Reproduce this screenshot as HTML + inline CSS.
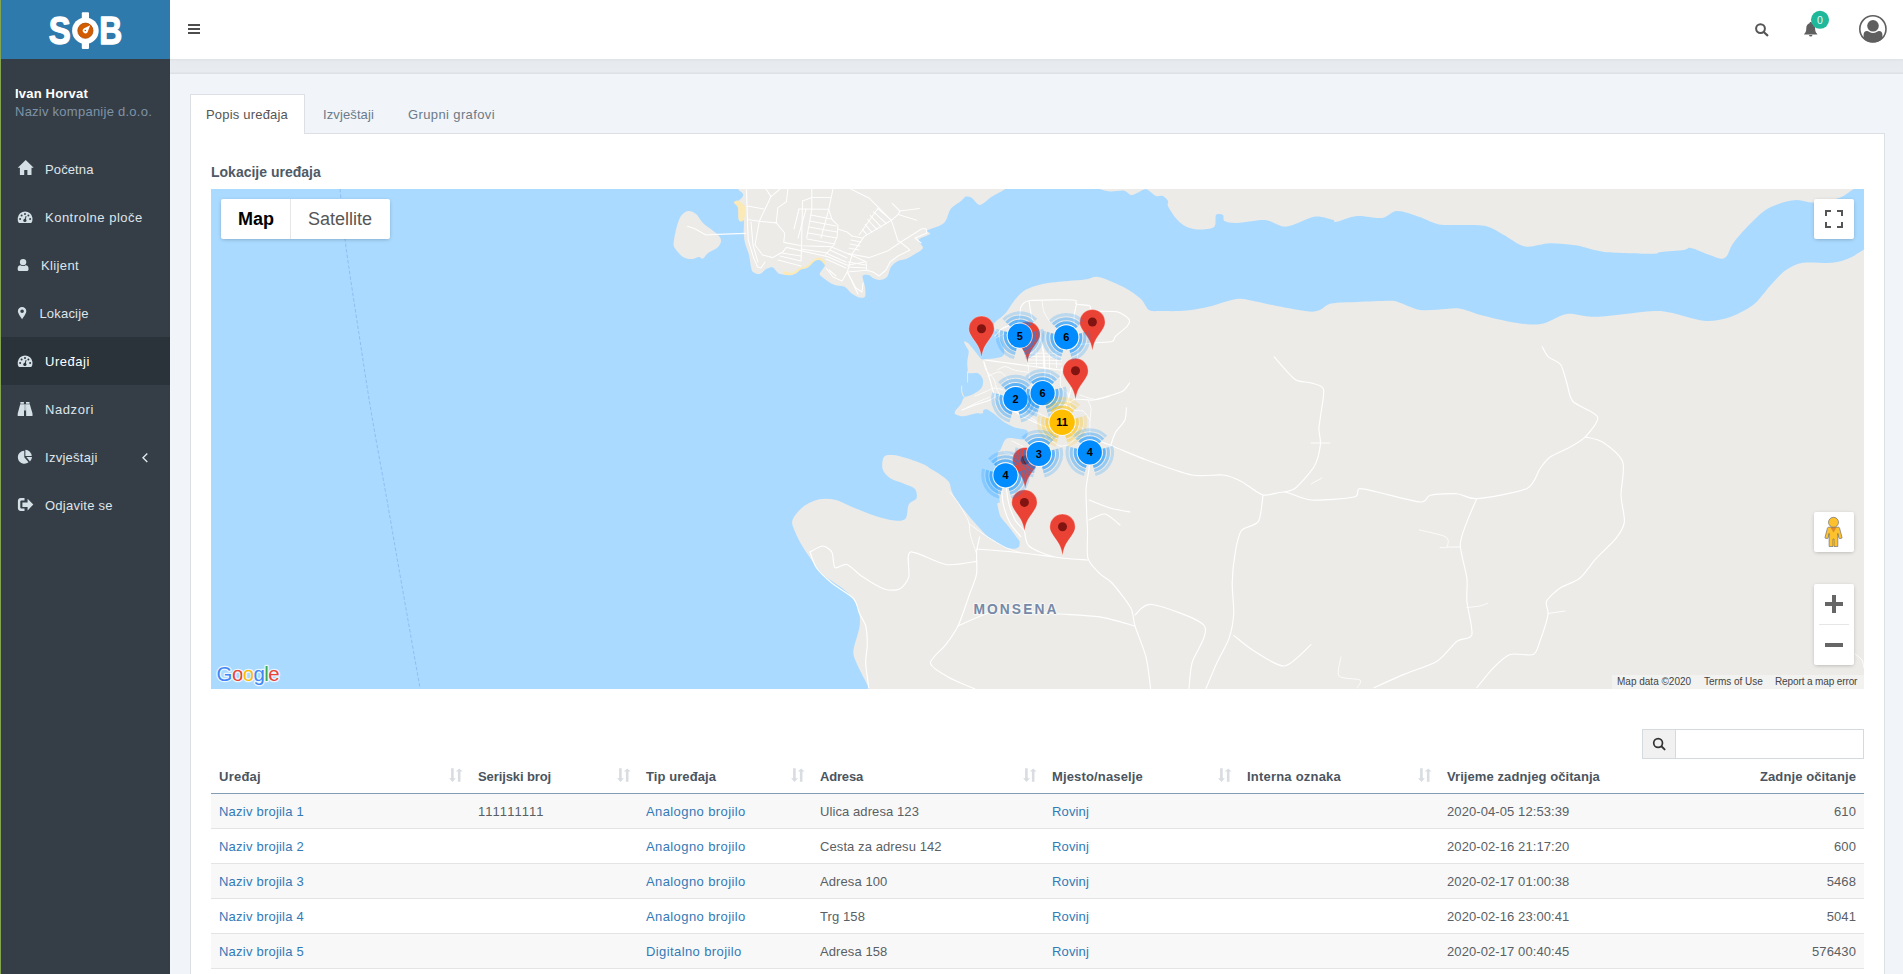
<!DOCTYPE html>
<html lang="hr">
<head>
<meta charset="utf-8">
<title>SOB - Uređaji</title>
<style>
*{box-sizing:border-box;margin:0;padding:0}
html,body{width:1903px;height:974px;overflow:hidden}
body{font-family:"Liberation Sans","DejaVu Sans",sans-serif;font-size:13px;color:#555;background:#f1f4f8;position:relative}
a{color:#337ab7;text-decoration:none}
.abs{position:absolute}
/* sidebar */
#side{position:absolute;left:0;top:0;width:170px;height:974px;background:#353e47}
#strip{position:absolute;left:0;top:0;width:1px;height:974px;background:#82a44e;z-index:5}
#logo{position:absolute;left:0;top:0;width:170px;height:59px;background:#2e7aad}
#user{position:absolute;left:15px;top:85px;line-height:18px;white-space:nowrap}
#user b{color:#fff;font-weight:bold;font-size:13px;letter-spacing:.2px}
#user span{color:#7f93a6;font-size:13px;letter-spacing:.25px}
.mi{position:absolute;left:0;width:170px;height:48px;color:#dfe5ea;font-size:13px;line-height:48px;white-space:nowrap}
.mi.act{background:#2a323a;color:#fff}
.mi{--bg:#353e47}.mi.act{--bg:#2a323a}
.mi svg{position:absolute;fill:#d5e0e6}
.mi .t{position:absolute;top:1px}
/* header */
#head{position:absolute;left:170px;top:0;width:1733px;height:59px;background:#fff}
#band{position:absolute;left:170px;top:59px;width:1733px;height:15px;background:linear-gradient(#dfe2e7 0,#e7eaef 3px,#e8ebf0 13px,#dde0e5 14px,#dde0e5 15px)}
/* tabs + card */
#card{position:absolute;left:190px;top:133px;width:1695px;height:860px;background:#fff;border:1px solid #dcdfe3}
.tab{position:absolute;top:94px;height:40px;line-height:40px;font-size:13px;color:#6b7a88;white-space:nowrap}
.tab.on{background:#fff;border:1px solid #dcdfe3;border-bottom:0;color:#555;border-radius:1px 1px 0 0}
#ttl{position:absolute;left:211px;top:162px;font-size:14px;font-weight:bold;color:#4e5a66;line-height:20px;white-space:nowrap}
#map{position:absolute;left:211px;top:189px;width:1653px;height:500px;background:#aadaff;overflow:hidden}
.gm{position:absolute;background:#fff;border-radius:2px;box-shadow:0 1px 4px -1px rgba(0,0,0,.3);white-space:nowrap}
.att{position:absolute;top:486px;height:14px;background:rgba(245,245,245,.7);font-size:10px;line-height:14px;color:#444;white-space:nowrap}
.att span{position:absolute;top:0}
/* table */
#srch{position:absolute;left:1642px;top:729px;width:222px;height:30px;border:1px solid #d5dade;background:#fff}
#srch i{position:absolute;left:0;top:0;width:33px;height:28px;background:#f1f1f1;border-right:1px solid #d5dade}
table{position:absolute;left:211px;top:759px;width:1653px;border-collapse:separate;border-spacing:0;table-layout:fixed;font-size:13px}
th{height:35px;text-align:left;padding:0 8px;font-weight:bold;color:#4b5560;border-bottom:1px solid #829db6;position:relative;white-space:nowrap}
td{height:35px;padding:0 8px;border-bottom:1px solid #e4e4e4;color:#5a5f65;white-space:nowrap}
tr.o td{background:#f8f8f8}
th.r,td.r{text-align:right}
th svg{position:absolute;right:7px;top:9px}
td:nth-child(1){letter-spacing:.22px}td:nth-child(2){font-kerning:none;letter-spacing:.06px}td:nth-child(3){letter-spacing:.4px}td:nth-child(4){letter-spacing:.09px}td:nth-child(5){letter-spacing:.15px}td:nth-child(7){letter-spacing:.09px}td:nth-child(8){letter-spacing:.1px}
</style>
</head>
<body>
<div id="side"></div>
<div id="logo"><svg width="170" height="59" viewBox="0 0 170 59" style="position:absolute;left:0;top:0">
<g fill="#fff" stroke="#fff" stroke-width="1.3" stroke-linejoin="round" font-family="Liberation Sans,sans-serif" font-weight="bold" font-size="39">
<text x="48.8" y="44.2" textLength="22" lengthAdjust="spacingAndGlyphs">S</text>
<text x="99.2" y="44.2" textLength="23" lengthAdjust="spacingAndGlyphs">B</text></g>
<rect x="81.8" y="12.2" width="7.2" height="36.7" rx="1" fill="#fff"/>
<circle cx="85.4" cy="30.7" r="13.3" fill="#fff"/>
<circle cx="85.4" cy="30.7" r="7.6" fill="#d35c00" stroke="#a84a08" stroke-width=".8"/>
<path d="M90.2 25.2 87.6 32.2A2.7 2.7 0 1 1 83.8 28.4Z" fill="#fff"/>
<circle cx="85.3" cy="30.5" r=".8" fill="#c0530a"/>
</svg></div>
<div id="strip"></div>
<div id="user"><b>Ivan Horvat</b><br><span>Naziv kompanije d.o.o.</span></div>

<div class="mi" style="top:145px"><svg style="left:0;top:0" width="170" height="48" viewBox="0 145 170 48"><path d="M25.7 160 33.7 167.8H31.5V175.1H27.4V170H24.2V175.1H19.9V167.8H17.8Z"/></svg><span class="t" style="left:45px;letter-spacing:0.12px">Početna</span></div>
<div class="mi" style="top:193px"><svg style="left:0;top:0" width="170" height="48" viewBox="0 193 170 48"><g transform="translate(0 0)"><path d="M18.9 223.1A7.45 7.45 0 1 1 31.3 223.1Z"/><g fill="var(--bg)"><circle cx="20.1" cy="218.9" r="1"/><circle cx="21.6" cy="215.4" r="1"/><circle cx="25" cy="213.9" r="1"/><circle cx="28.4" cy="215.4" r="1"/><circle cx="30.1" cy="218.9" r="1"/><circle cx="24.9" cy="220.4" r="1.6"/><path d="M24.4 220.2 25.6 215.9 26.5 216.1 25.6 220.6Z"/></g></g></svg><span class="t" style="left:45px;letter-spacing:0.49px">Kontrolne ploče</span></div>
<div class="mi" style="top:241px"><svg style="left:0;top:0" width="170" height="48" viewBox="0 241 170 48"><circle cx="23.1" cy="262.1" r="3.2"/><path d="M17.7 269.4V268.3Q17.9 265.4 20.6 265.2Q23.1 266.9 25.6 265.2Q28.3 265.4 28.5 268.3V269.4Q28.4 271 26.8 271.1H19.4Q17.8 271 17.7 269.4Z"/></svg><span class="t" style="left:41px;letter-spacing:0.38px">Klijent</span></div>
<div class="mi" style="top:289px"><svg style="left:0;top:0" width="170" height="48" viewBox="0 289 170 48"><path fill-rule="evenodd" d="M22.1 307.1A4.2 4.2 0 0 1 26.3 311.3C26.3 313.4 23.6 317 22.1 319.2C20.6 317 17.9 313.4 17.9 311.3A4.2 4.2 0 0 1 22.1 307.1ZM22.1 309.5A1.8 1.8 0 1 0 22.1 313.1A1.8 1.8 0 1 0 22.1 309.5Z"/></svg><span class="t" style="left:39.4px;letter-spacing:0.2px">Lokacije</span></div>
<div class="mi act" style="top:337px"><svg style="left:0;top:0" width="170" height="48" viewBox="0 337 170 48"><g transform="translate(0 144)"><path d="M18.9 223.1A7.45 7.45 0 1 1 31.3 223.1Z"/><g fill="var(--bg)"><circle cx="20.1" cy="218.9" r="1"/><circle cx="21.6" cy="215.4" r="1"/><circle cx="25" cy="213.9" r="1"/><circle cx="28.4" cy="215.4" r="1"/><circle cx="30.1" cy="218.9" r="1"/><circle cx="24.9" cy="220.4" r="1.6"/><path d="M24.4 220.2 25.6 215.9 26.5 216.1 25.6 220.6Z"/></g></g></svg><span class="t" style="left:45px;letter-spacing:0.53px">Uređaji</span></div>
<div class="mi" style="top:385px"><svg style="left:0;top:0" width="170" height="48" viewBox="0 385 170 48"><path d="M20.4 401.9H23.9V403.8H20.4ZM26 401.9H29.5V403.8H26ZM20.2 404.2H24V416H17.7V413.5ZM26 404.2H29.8L32.5 413.5V416H26.2ZM24.2 404.2H25.8V410.4H24.2Z"/></svg><span class="t" style="left:45px;letter-spacing:0.58px">Nadzori</span></div>
<div class="mi" style="top:433px"><svg style="left:0;top:0" width="170" height="48" viewBox="0 433 170 48"><path d="M24.3 450.7V457.2L28.5 462.2A6.5 6.5 0 1 1 24.3 450.7Z"/><path d="M25.4 449.8A6.3 6.3 0 0 1 31.7 456.1H25.4Z"/><path d="M26.3 457.1H32A6.3 6.3 0 0 1 30 461.5Z"/></svg><svg width="170" height="48" viewBox="0 433 170 48" style="left:0;top:0"><path d="M147.3 453.6 143 457.8 147.3 462" fill="none" stroke="#dfe5ea" stroke-width="1.4"/></svg><span class="t" style="left:45px;letter-spacing:0.27px">Izvještaji</span></div>
<div class="mi" style="top:481px"><svg style="left:0;top:0" width="170" height="48" viewBox="0 481 170 48"><path d="M24.5 498H20.9Q18 498.1 17.9 501V508Q18 510.9 20.9 511H24.5V508.6H21.4Q20.4 508.5 20.3 507.5V501.5Q20.4 500.5 21.4 500.4H24.5Z"/><path d="M27.6 498.8 33.3 504.6 27.6 510.5V506.9H22.4V502.4H27.6Z"/></svg><span class="t" style="left:45px;letter-spacing:0.24px">Odjavite se</span></div>

<div id="head"><svg width="1733" height="59" viewBox="170 0 1733 59" style="position:absolute;left:0;top:0">
<path d="M188 24h12v2h-12zM188 28h12v2h-12zM188 32h12v2h-12z" fill="#4d4d4d"/>
<circle cx="1760.5" cy="28.6" r="4.4" fill="none" stroke="#555" stroke-width="2"/><path d="M1764 32.3 1767.4 35.4" stroke="#555" stroke-width="2.1" stroke-linecap="round"/>
<path d="M1810.7 22.1C1811.6 22.1 1811.9 22.7 1811.9 23.3C1814.2 24 1815.1 26 1815.1 28.2C1815.1 31 1815.8 32.6 1817.3 33.9V34.5H1804.1V33.9C1805.6 32.6 1806.3 31 1806.3 28.2C1806.3 26 1807.2 24 1809.5 23.3C1809.5 22.7 1809.8 22.1 1810.7 22.1ZM1809 34.9H1812.4A1.7 1.7 0 0 1 1809 34.9Z" fill="#5f5f5f"/>
<circle cx="1820" cy="19.8" r="9.05" fill="#1fb89a"/>
<text x="1820" y="23.6" text-anchor="middle" font-family="Liberation Sans,sans-serif" font-size="10.5" fill="#e8fbf6">0</text>
<clipPath id="uc"><circle cx="1872.9" cy="28.9" r="13.4"/></clipPath>
<g clip-path="url(#uc)" fill="#5f5f5f"><circle cx="1873" cy="25.8" r="5.8"/><path d="M1863.6 46V34.5Q1863.8 31.4 1866.8 31.1Q1868 31 1869 31.8Q1873 34.4 1877 31.8Q1878 31 1879.2 31.1Q1882.2 31.4 1882.4 34.5V46Z"/></g>
<circle cx="1872.9" cy="28.9" r="13.1" fill="none" stroke="#5f5f5f" stroke-width="1.6"/>
</svg></div>
<div id="band"></div>

<div id="card"></div>
<div class="tab on" style="left:190px;width:115px;padding-left:15px;letter-spacing:.19px">Popis uređaja</div>
<div class="tab" style="left:323px;top:95px;letter-spacing:.11px">Izvještaji</div>
<div class="tab" style="left:408px;top:95px;letter-spacing:.38px">Grupni grafovi</div>
<div id="ttl">Lokacije uređaja</div>

<div id="map"><svg width="1653" height="500" viewBox="211 189 1653 500" style="position:absolute;left:0;top:0;display:block">
<rect x="211" y="189" width="1653" height="500" fill="#aadaff"/>
<path d="M340 189C341 198.7 342.8 222.8 346 247C349.2 271.2 354.8 306.7 359 334C363.2 361.3 366.7 385.2 371 411C375.3 436.8 380.8 465.5 385 489C389.2 512.5 390.2 518.8 396 552C401.8 585.2 416 665.3 420 688" fill="none" stroke="#86b4ec" stroke-width="0.9" stroke-dasharray="3.5 2" opacity=".85"/>
<g fill="#ecebe8">
<path d="M688 211C690.5 210.7 693.5 212 696 214C698.5 216 700.3 220.3 703 223C705.7 225.7 709.3 227.8 712 230C714.7 232.2 717.5 234.1 719 236C720.5 237.9 721.3 239.5 721 241.5C720.7 243.5 719.2 246.1 717 248C714.8 249.9 710.3 251.2 708 253C705.7 254.8 704.5 257.8 703 258.5C701.5 259.2 700.8 256.9 699 257C697.2 257.1 694.7 259 692 259C689.3 259 685.9 258.9 683 257C680.1 255.1 676 250.3 674.5 247.5C673 244.7 673.6 243.6 674 240C674.4 236.4 675.8 230 677 226C678.2 222 679.2 218.5 681 216C682.8 213.5 685.5 211.3 688 211Z"/>
<path d="M738 185C738 186.3 737.2 187.7 738 189C738.8 190.3 742.4 192.7 743 194C743.6 195.3 742.8 196.4 742 197.5C741.2 198.6 739.2 200.2 738 201C736.8 201.8 734 201.5 734 202.5C734 203.5 737.2 205 738 207.6C738.8 210.2 738.1 218.1 739 220C739.9 221.9 743 218.1 743.7 220C744.4 221.9 743.5 229.6 743.7 233C743.9 236.4 744.2 239.7 745 243C745.8 246.3 748.1 251.4 749 255C749.9 258.6 750.4 264.4 751 267C751.6 269.6 751.6 270.9 753 272C754.4 273.1 757.9 274.5 760 274C762.1 273.5 765 269.6 767 268.6C769 267.6 771.4 266.7 773 267.4C774.6 268.1 776.5 271.9 778 273C779.5 274.1 780.9 274.2 783 274.5C785.1 274.8 789.5 275.8 792 275C794.5 274.2 797.8 270.6 800 269.5C802.2 268.4 804.5 269.2 806.7 267.8C809 266.4 812.7 261.3 815 260C817.3 258.7 820.5 258.2 822 259C823.5 259.8 825.3 262.9 825 265C824.7 267.1 820.6 271.4 820 273C819.4 274.6 819.4 274.5 821 276C822.6 277.5 828 281.6 830.4 283C832.8 284.4 834.8 285 837 285.6C839.2 286.2 842.9 285.9 845 287C847.1 288.1 848.9 291.4 851 293C853.1 294.6 856.9 296.9 859 297.4C861.1 297.9 864.1 298.2 865 296.6C865.9 295 865.4 290.1 865 287C864.6 283.9 862.1 277.8 862.6 276C863.1 274.2 866.9 274.7 868.5 275C870.1 275.3 871.4 277.2 873 278C874.6 278.8 877.4 280.1 879.5 280C881.6 279.9 885.3 278.9 887 277C888.7 275.1 889.4 269.4 891 267C892.6 264.6 895.8 262.2 898 261C900.2 259.8 903.5 260.1 906 259C908.5 257.9 912.5 255.7 915 254C917.5 252.3 922.5 250.1 923 248C923.5 245.9 917.5 242.1 918.5 240C919.5 237.9 928.7 235.4 930 234C931.3 232.6 925.6 231.7 927 230.5C928.4 229.3 936.2 227.4 939 226C941.8 224.6 943.8 223.6 945.6 221C947.4 218.4 948.4 212 950.7 209C953 206 958.7 202.9 961 201C963.3 199.1 964.4 197 966 196.6C967.6 196.2 969.9 196.7 972 198C974.1 199.3 977 205.2 980 205C983 204.8 988.4 198.8 992 196.6C995.6 194.3 1001.2 191.6 1003.7 190C1006.2 188.4 1008.2 187.5 1009 186C1009.8 184.5 1049.7 180.9 1009 180C968.4 179.1 778.6 179.2 738 180C697.4 180.8 738 183.7 738 185Z"/>
<path d="M1100 186C1100 187.3 1098.5 188.2 1100 189C1101.5 189.8 1106.4 191.2 1110 191.5C1113.6 191.8 1120.7 190.2 1124 190.7C1127.3 191.2 1129 195.2 1132 195C1135 194.8 1141.5 190.1 1144 189.5C1146.5 188.9 1147.2 189.7 1149 190.7C1150.8 191.7 1153.9 195.2 1156 196C1158.1 196.8 1161.2 195.2 1163 196C1164.8 196.8 1167.2 199.5 1168 201C1168.8 202.5 1166.8 203.4 1168 206C1169.2 208.6 1173.2 215 1175.7 218C1178.2 221 1181.8 224.3 1185 226C1188.2 227.7 1192.7 229.3 1197 229.5C1201.3 229.7 1211.2 229.2 1214 227C1216.8 224.8 1214.7 216.8 1216 215C1217.3 213.2 1221.7 214.1 1223 215C1224.3 215.9 1222.4 219.8 1224.5 221C1226.6 222.2 1230.9 223.2 1237 223C1243.1 222.8 1257.6 219.5 1265 220C1272.4 220.5 1279.2 227.1 1286.5 226.6C1293.8 226.1 1307.1 217.7 1314 216.7C1320.9 215.7 1329.4 219 1332.7 219.8C1336 220.6 1332.4 222.6 1336 222C1339.6 221.4 1350.1 216.6 1357 216C1363.9 215.4 1376 218.8 1382 218C1388 217.2 1391.5 211.2 1397 211C1402.5 210.8 1412.7 214.7 1419 216.7C1425.3 218.7 1432.7 223.2 1439 224.4C1445.3 225.6 1454 224.8 1461 225C1468 225.2 1479.4 224.6 1485.7 226C1492 227.4 1497.1 231.4 1503 234.5C1508.9 237.6 1518 245.1 1525 246.4C1532 247.7 1542.2 243.3 1550 243.2C1557.8 243.1 1568.8 244.3 1577 245.6C1585.2 246.9 1593.4 250.8 1604.6 252C1615.8 253.2 1643.1 253.8 1651.6 253.8C1660.1 253.8 1656.2 252.6 1661 252C1665.8 251.4 1679.3 250.6 1683.8 250C1688.3 249.4 1687.3 247.3 1691 248C1694.7 248.7 1704 253 1708.5 254.6C1713 256.2 1718.2 258.6 1721 258.8C1723.8 259 1725.2 258.1 1727 255.8C1728.8 253.5 1729.8 248 1733 243.5C1736.2 239 1743.1 231 1748 226C1752.9 221 1760.3 213.5 1765.5 210C1770.7 206.5 1778 204.1 1782.8 202.6C1787.6 201.1 1793 200 1797.6 200C1802.2 200 1807.4 202.9 1813.7 202.6C1820 202.3 1834 199.6 1839.7 197.7C1845.4 195.8 1849 191.8 1852 190C1855 188.2 1858.8 187.5 1860 186C1861.2 184.5 1974 180.9 1860 180C1746 179.1 1214 179.1 1100 180C986 180.9 1100 184.7 1100 186Z"/>
<path d="M1868 247C1867.4 180.5 1866.8 247.9 1864 249.6C1861.2 251.2 1854.4 256 1849.6 258C1844.8 260 1839 262.1 1832 262.8C1825 263.5 1809.6 261.6 1802.6 262.8C1795.5 264 1789.8 267.3 1785 270.7C1780.2 274.1 1775.2 280.4 1770.4 285.5C1765.6 290.6 1759.4 300.2 1753 305C1746.6 309.8 1735.4 315.3 1728 317.7C1720.6 320.1 1712.1 321.4 1703.6 320.7C1695.1 320 1678.8 314.3 1671.4 312.8C1664 311.3 1661.9 310.7 1654 311C1646.1 311.3 1628.4 313.8 1619 314.7C1609.6 315.6 1599.3 316.9 1591.5 316.8C1583.7 316.7 1574 313.1 1567 314C1560 314.9 1550.5 321.4 1545 323C1539.5 324.6 1535.5 324.6 1530 324.4C1524.5 324.2 1515.4 322.8 1508 321.4C1500.6 320 1487.9 316.9 1480.6 315C1473.2 313.1 1465.5 309.3 1459 308.5C1452.5 307.7 1443.5 309.5 1437.5 309.7C1431.5 309.9 1424.5 310.7 1419 309.7C1413.5 308.7 1404.7 304.3 1400.5 303C1396.3 301.7 1397.5 300.9 1391 300.8C1384.5 300.7 1366 301.6 1357 302C1348 302.4 1337.5 302.2 1331 303.6C1324.5 305 1322.1 311.2 1314 311.6C1305.9 312 1287.7 307.9 1277 306C1266.3 304.1 1250.2 299.8 1243 299C1235.8 298.2 1233.7 299.8 1229 300.8C1224.3 301.8 1218.4 304.4 1212 305.9C1205.6 307.4 1194.2 309.8 1186.6 310.6C1178.9 311.4 1166.6 311.1 1161 311C1155.4 310.9 1152 311.8 1149 310C1146 308.2 1144.2 302.1 1140.9 299C1137.6 295.9 1131.6 291.7 1127 289C1122.4 286.3 1114.5 282.8 1110 281C1105.5 279.2 1100.7 277 1096.9 276.8C1093.2 276.6 1089.3 279 1085 279.6C1080.7 280.2 1074.4 280.4 1068 281C1061.6 281.6 1048.9 282.6 1042.6 283.9C1036.3 285.2 1029.8 287.5 1025.7 289.8C1021.6 292.1 1018.5 295.5 1015.5 299C1012.5 302.5 1008.6 309.7 1005.7 313C1002.9 316.3 998.5 318.8 996.5 320.8C994.5 322.8 992.5 324.4 992.6 326.2C992.7 328 995.4 330.2 997 333C998.6 335.8 1002.2 341.5 1003 345C1003.8 348.5 1005.5 354.2 1002.6 356.3C999.8 358.4 987.3 359.1 984 359.3C980.7 359.5 981.8 359.2 980.3 357.8C978.8 356.4 975.8 352.2 974 350C972.2 347.8 969.5 344.3 968 343C966.5 341.7 964.2 341 964 341.6C963.8 342.2 965.7 345.5 966.4 347C967.1 348.5 968.6 349.3 968.7 351.6C968.8 353.9 967.3 359.4 967.2 362.4C967.1 365.4 967.7 370.1 968 371.7C968.3 373.3 968 373 969.5 373.2C971 373.4 976 372.4 978 373.2C980 374 981.9 376.8 982.6 378.6C983.3 380.4 983.1 383.8 982.6 385.5C982.1 387.2 981.1 388.6 979.5 390C977.9 391.4 974.1 393.6 971.8 394.8C969.5 396 965.6 396.4 964 397.8C962.4 399.2 962.4 401.9 961 404C959.6 406.1 955.6 410.1 954.9 411.7C954.2 413.3 955 414.1 956.4 414.8C957.8 415.5 961 416.5 964 416.3C967 416.1 973.6 413.8 976.4 413.3C979.2 412.9 981.6 413.8 982.6 413.3C983.6 412.8 982.7 410.8 983.4 410.2C984.1 409.6 985.7 408.9 987.2 409.4C988.7 409.9 991.1 411.6 993.4 413.3C995.7 415 999.6 418.9 1002.6 421C1005.6 423.1 1010.5 425.8 1013.4 427C1016.3 428.2 1019.9 428.4 1022 429C1024.1 429.6 1027.1 429.6 1027.7 431C1028.3 432.4 1026.7 436.7 1026 438C1025.3 439.3 1025.2 439.5 1022.8 439.5C1020.4 439.5 1012.4 437.9 1009.7 438C1007 438.1 1006.1 438.7 1004.7 440.4C1003.3 442.1 1001.6 447.5 1000.6 449.4C999.6 451.3 998.7 449.9 998 453C997.3 456.1 996 464.1 996 470C996 475.9 997.4 487.2 998 492C998.6 496.8 999.9 500.3 999.8 502C999.7 503.7 997.6 502.6 997.4 503.6C997.2 504.6 997.8 506.8 998.2 508.5C998.6 510.2 999.1 513.3 999.8 515C1000.5 516.7 1001.5 518 1003 520C1004.5 522 1007.8 525.5 1009.7 528C1011.7 530.5 1014.5 534.4 1016 536.4C1017.5 538.4 1019.1 539.8 1019.5 541.4C1019.9 543 1019.7 545.9 1018.7 547C1017.7 548.1 1015.4 548.9 1013 548.8C1010.6 548.7 1006 547.7 1003 546.3C1000 544.9 995.4 541.3 993 539.7C990.6 538.1 989.4 538.1 986.7 535.6C984 533.1 978 526.3 975 523C972 519.7 969.4 516.3 967 513.4C964.6 510.5 961 506.8 958.8 503.6C956.5 500.4 953.5 495.2 952 492C950.5 488.8 950.7 484.6 949 482C947.3 479.4 943.4 476.8 940.7 474.9C938 472.9 933.5 470.6 931 469C928.5 467.4 927.8 466 924 464.4C920.2 462.8 910.6 459.4 906 458C901.4 456.6 896.3 455.2 893 455C889.7 454.8 885.6 454.6 884 456.7C882.4 458.8 881.7 465.8 882.6 469C883.5 472.2 886.8 476 890.3 478.3C893.8 480.6 902.1 482.8 905.8 484.4C909.5 486 913.4 486.9 915 489C916.6 491.1 917.4 496 916.5 498.3C915.6 500.6 910.4 501.5 908.8 504.5C907.2 507.5 907.6 515.9 905.8 518.3C904 520.7 900.7 521 896.5 520.8C892.3 520.6 884.5 518.8 878 516.8C871.5 514.8 859.9 510.1 853.4 507.5C846.9 504.9 840 501 834.9 499.8C829.8 498.6 824.1 498.3 819.5 499.2C814.9 500.1 808 503.1 804.1 506C800.2 508.9 794.9 515.1 793.3 518.3C791.7 521.5 791.7 523 793.3 527.6C794.9 532.2 799.7 542.2 804.1 549.1C808.5 556 816.1 567.2 822.6 573.7C829.1 580.2 841.9 587.1 847.2 592.2C852.5 597.3 856.1 602.5 858 607.6C859.9 612.7 860.3 619.6 859.6 626.1C858.9 632.6 853.9 645.2 853.4 650.7C852.9 656.2 854.7 658.4 856.5 663C858.3 667.6 863.9 677.7 865.7 681.5C867.5 685.3 868.3 686.9 868.8 688.6C869.3 690.3 719.1 692.3 869 693C1018.9 693.7 1718.2 759.9 1868 693C2017.8 626.1 1868.6 313.5 1868 247Z"/>
</g>
<path d="M967.6 371.5V382M961.7 386.4Q961 393 964 397" fill="none" stroke="#ecebe8" stroke-width="1.1" stroke-linecap="round"/>
<path d="M734 202.5C734 201.3 736.3 200.1 738 200.5C739.7 200.9 742.8 203.4 744 205C745.2 206.6 745.5 207.5 745.5 210C745.5 212.5 744.8 218.3 743.7 220C742.6 221.7 740 222.4 739 220.3C738 218.2 738.8 210.6 738 207.6C737.2 204.6 734 203.7 734 202.5Z" fill="#fbe9b6"/>
<path d="M783 272.5C783 271.9 784.5 271.4 786 271.5C787.5 271.6 790.2 273.3 792 273C793.8 272.7 795.5 270.4 797 269.5C798.5 268.6 799.4 268.1 801 267.5C802.6 266.9 804.9 267.1 806.7 266C808.5 264.9 810.3 262.3 812 261C813.7 259.7 815.3 258.4 817 258C818.7 257.6 820.7 257.8 822 258.5C823.3 259.2 824.4 260.8 825 262C825.6 263.2 825.7 265.7 825.5 266C825.3 266.3 824.8 264.9 824 264C823.2 263.1 822 261 820.5 260.5C819 260 817.1 259.8 815 261C812.9 262.2 810.3 266.1 808 267.5C805.7 268.9 803.2 268.4 801 269.5C798.8 270.6 797.5 273.1 795 274C792.5 274.9 788 275.2 786 275C784 274.8 783 273.1 783 272.5Z" fill="#fbe9b6"/>
<g fill="none" stroke="#fff" stroke-width="1.15" stroke-linecap="round" stroke-linejoin="round">
<path d="M1062 422C1063.7 424 1071.4 433 1075 437C1078.6 441 1087.1 447.7 1089 452C1090.9 456.3 1089.4 463.9 1089 469C1088.6 474.1 1086.2 482.4 1086 490.6C1085.8 498.8 1087.2 521.6 1087.5 530.6C1087.8 539.6 1086.4 552.7 1088 558.4C1089.6 564.1 1096.6 570.4 1099.8 573.7C1103 577 1107.9 578.5 1112 583C1116.1 587.5 1127.5 601.9 1130.6 607.6C1133.7 613.3 1132.9 619.4 1135 626C1137.1 632.6 1143.9 648.7 1146 657C1148.1 665.3 1150 684.4 1150.6 688.6"/>
<path d="M1075 437C1078.3 437.6 1090.3 438.3 1099.8 441.3C1109.3 444.3 1133.7 455.3 1146 459.8C1158.3 464.3 1181.7 473 1192 475C1202.3 477 1216.4 474.1 1223 475C1229.6 475.9 1236.1 478.7 1241.4 481.4C1246.7 484.1 1257.3 493.6 1263 495C1268.7 496.4 1278.1 491.3 1284.5 492C1290.9 492.7 1301.7 499.3 1311 500C1320.3 500.7 1347.6 498.5 1354 497C1360.4 495.5 1355.9 489.4 1359 488.7C1362.1 488 1369.1 490.2 1377.3 492C1385.5 493.8 1413.4 501.6 1420.5 502C1427.6 502.4 1425.5 496.4 1430.4 495.3C1435.3 494.2 1450.8 493.3 1457 493.7C1463.2 494.1 1467.5 499.3 1476.8 498.6C1486.1 497.9 1518.2 492.7 1526.6 488.7C1535 484.7 1536.8 473 1539.9 468.8C1543 464.6 1545.8 460.1 1549.8 457.2C1553.8 454.3 1565 449.9 1569.7 447.2C1574.4 444.5 1581.6 440.9 1585.3 436.9C1589 432.9 1599.2 421.6 1597.6 416.9C1596 412.2 1577.1 406 1573 401.5C1568.9 397 1568.5 387.9 1566.8 383C1565.1 378.1 1563.1 368 1560.6 364.5C1558.1 361 1550.8 359.2 1548.3 356.8C1545.8 354.4 1543 348 1542.2 346.7"/>
<path d="M1263 495C1262.4 498.5 1261.3 516.7 1258.4 521.4C1255.5 526.1 1244.5 526.5 1241.4 530.6C1238.3 534.7 1236.5 545.2 1235.3 552.2C1234.1 559.2 1232.4 574.8 1232.2 583C1232 591.2 1234.1 606.4 1233.7 613.8C1233.3 621.2 1231.3 631.8 1229 638.4C1226.7 645 1219.9 656.3 1216.8 663C1213.7 669.7 1207.4 685.2 1206 688.6"/>
<path d="M1585.3 436.9C1587.6 437.6 1597.9 438.9 1602.9 442.3C1607.9 445.7 1620.4 455.1 1622.8 462.2C1625.2 469.3 1620.8 487.3 1621 495.3C1621.2 503.3 1625.1 516.2 1624.4 521.9C1623.7 527.6 1619.8 533.5 1616 538.4C1612.2 543.3 1601 553.1 1596.2 558.4C1591.4 563.7 1584.6 574.3 1579.7 578.3C1574.8 582.3 1564.2 585.1 1559.8 588.2C1555.4 591.3 1548.1 598 1546.5 601.5C1544.9 605 1548.9 609.4 1548 614.7C1547.1 620 1541.9 636 1539.9 641.3C1537.9 646.6 1537.2 652.7 1533.2 654.5C1529.2 656.3 1515.3 652.7 1510 654.5C1504.7 656.3 1497.8 663.4 1493.4 667.8C1489 672.2 1479 685 1476.8 687.7"/>
<path d="M1476.8 498.6C1475.5 501.7 1469.1 515.7 1466.9 521.9C1464.7 528.1 1460.3 537.5 1460.3 545C1460.3 552.5 1466 570.8 1466.9 578.3C1467.8 585.8 1466.2 594 1466.9 601.5C1467.6 609 1473.2 629.3 1471.9 634.6C1470.6 639.9 1461.7 637.8 1457 641.3C1452.3 644.8 1444.1 656.8 1437 661.2C1429.9 665.6 1412.3 670.9 1403.9 674.4C1395.5 677.9 1378 685.9 1374 687.7"/>
<path d="M1274.2 356.8C1275.4 358.2 1280.6 364.5 1283.5 367.6C1286.4 370.7 1292.1 377.9 1295.8 380C1299.5 382.1 1307.5 381.8 1311.2 383C1314.9 384.2 1322.3 384.7 1323.5 389.2C1324.7 393.7 1321 411.6 1320.4 416.9C1319.8 422.2 1318.9 425.5 1318.9 429.2C1318.9 432.9 1321 439.7 1320.4 444.6C1319.8 449.5 1317.6 460.5 1314.3 466.2C1311 471.9 1299.8 484.3 1295.8 487.7C1291.8 491.1 1286 491.4 1284.5 492"/>
<path d="M1024.3 530C1024.9 532.1 1025.1 542.4 1029 546C1032.9 549.6 1045.8 554.9 1053.6 556.8C1061.4 558.7 1083 559.6 1087.5 560"/>
<path d="M976.6 549C981.5 549.4 1003.2 551 1013.5 552C1023.8 553 1048.3 556.2 1053.6 556.8"/>
<path d="M979.7 536.8C979.3 538.8 977 547.1 976.6 552C976.2 556.9 977.4 568.4 976.6 573.7C975.8 579 972.9 585 970.4 592C967.9 599 961.3 619 958 626C954.7 633 949.5 639.7 945.8 644.6C942.1 649.5 930.1 658.7 930.4 663C930.7 667.3 942.1 673.5 948 677C953.9 680.5 971.4 687.4 975 689"/>
<path d="M810 552C811.7 551.2 819.7 546 822.6 546C825.5 546 830.1 549.1 831.8 552C833.5 554.9 833 565.9 835 567.6C837 569.3 843.3 563.3 847 564.5C850.7 565.7 857.6 573.5 862.6 576.8C867.6 580.1 879.3 587.4 884.2 589C889.1 590.6 896.3 590.6 899.6 589C902.9 587.4 907.4 581.7 908.8 576.8C910.2 571.9 905.5 553.6 910.4 552C915.3 550.4 937 563.2 945.8 564.5C954.6 565.8 972.5 561.8 976.6 561.4"/>
<path d="M810 552C810.9 554.1 813.5 563.5 816.4 567.6C819.3 571.7 826.9 578.9 831.8 583C836.7 587.1 849.7 594.3 853.4 598.4C857.1 602.5 858 610.1 859.6 613.8C861.2 617.5 864.7 621.9 865.7 626C866.7 630.1 867.3 639.7 867.3 644.6C867.3 649.5 865.5 657.3 865.7 663C865.9 668.7 868.4 684.4 868.8 687.7"/>
<path d="M958 626C963.6 623.9 986.8 611.6 1000 610C1013.2 608.4 1043.4 612.9 1056.7 613.8C1070 614.7 1089.4 615.3 1099.8 616.9C1110.2 618.5 1130.3 624.8 1135 626"/>
<path d="M1135 615C1137.3 613.6 1142.7 603 1152 604.5C1161.3 606 1199.2 618.2 1204.5 626C1209.8 633.8 1194.1 654.7 1192 663C1189.9 671.3 1189.4 685.2 1189 688.6"/>
<path d="M1311 644.6C1307.5 647.5 1292.1 665.2 1284.5 666C1276.9 666.8 1260.5 654.8 1253.7 650.7C1246.9 646.6 1236.4 637.4 1233.7 635.4"/>
<path d="M1075.5 399C1077.8 399.1 1088.3 400.5 1093 400C1097.7 399.5 1107 396.5 1111 395.3C1115 394.1 1120.8 392.3 1123.3 390.7C1125.8 389.1 1128.7 384 1129.5 383"/>
<path d="M1126.4 407.7C1126.2 409.3 1126.3 416.7 1124.9 420C1123.5 423.3 1117.5 429 1115.6 432.3C1113.7 435.6 1111.6 443 1111 444.6"/>
<path d="M1020.6 307.6C1021.7 306.7 1022 301.8 1029 300.8C1036 299.8 1066.7 299.6 1073 300C1079.3 300.4 1074.2 303.2 1076.5 304C1078.8 304.8 1088 305 1090 305.9C1092 306.8 1088.2 310.2 1091.8 311C1095.4 311.8 1112 310.7 1117 311.8C1122 312.9 1127.6 317.5 1129 319.4C1130.4 321.3 1129.1 323.7 1127.3 326C1125.5 328.3 1117.5 334.3 1115.5 336.4C1113.5 338.5 1114.9 340.6 1112 341.5C1109.1 342.4 1098.3 342.5 1093.5 343C1088.7 343.5 1078.3 344.7 1076 345"/>
<path d="M1020.6 307.6C1020.3 309.5 1020.3 319.3 1018 322C1015.7 324.7 1006.1 326.1 1003 328C999.9 329.9 996.1 334.9 995 336"/>
<path d="M1076.5 304C1076.2 306.1 1073.8 313.9 1074 320C1074.2 326.1 1077.9 343.1 1078 350C1078.1 356.9 1076.3 365.3 1075 372C1073.7 378.7 1069.7 393.3 1068 400C1066.3 406.7 1062.8 419.1 1062 422"/>
<path d="M1029 300.8C1029.4 303.1 1030.3 312.1 1032 318C1033.7 323.9 1040.3 338.1 1042 345C1043.7 351.9 1044.9 363.6 1045 370C1045.1 376.4 1042.9 389.9 1042.6 393"/>
<path d="M985 360C987 360.3 994 361.2 1000 362C1006 362.8 1022 364.9 1030 366C1038 367.1 1054 369.2 1060 370C1066 370.8 1073 371.7 1075 372"/>
<path d="M984 362C984.8 364.4 988.4 375.2 990 380C991.6 384.8 993.1 394 996 398C998.9 402 1007.5 407.1 1012 410C1016.5 412.9 1024.9 417.6 1030 420C1035.1 422.4 1045.7 427.7 1050 428C1054.3 428.3 1060.4 422.8 1062 422"/>
<path d="M962 410C963.7 409.3 971.3 406.3 975 405C978.7 403.7 986.7 401.3 990 400C993.3 398.7 996.7 395.1 1000 395C1003.3 394.9 1009.4 399.3 1015 399C1020.6 398.7 1035.7 392.2 1042 393C1048.3 393.8 1057.6 404.2 1062 405C1066.4 405.8 1073.3 399.8 1075 399"/>
<path d="M1038 454C1039.6 452.1 1046.8 444.3 1050 440C1053.2 435.7 1060.4 424.4 1062 422"/>
<path d="M1005 475C1005.4 478.3 1006.7 494 1008 500C1009.3 506 1012.9 516 1015 520C1017.1 524 1022.8 528.7 1024 530"/>
<path d="M1001 478C1001.3 481.3 1001.8 497 1003 503C1004.2 509 1007.6 518.5 1010 523C1012.4 527.5 1019.5 535.1 1021 537"/>
<path d="M1038 454C1036.9 456.1 1031.7 465.5 1030 470C1028.3 474.5 1025.8 483.6 1025 488C1024.2 492.4 1024.1 501 1024 503"/>
<path d="M1089 500C1091.8 501.1 1104.5 506.4 1110 508C1115.5 509.6 1127.3 511.5 1130 512"/>
<path d="M1089 520C1091.1 519.2 1100.9 513.3 1105 514C1109.1 514.7 1118 523.5 1120 525"/>
</g>
<g fill="none" stroke="#fff" stroke-width="1.1" stroke-linecap="round" stroke-linejoin="round" opacity=".95">
<path d="M687.3 226.3 L694.9 228.8 L705.9 235 L716.9 234.4 L745.7 233.4"/>
<path d="M746.5 189 L747.4 219.5 L748.2 239.8 L753.3 256.8 L757.6 267 L761 268 L765 262"/>
<path d="M771 196.6 L759.3 221.2 L755 245 L762.6 255 L772.8 257.6 L783 251.7"/>
<path d="M766 189 L771 196.6 L780 189"/>
<path d="M747.4 206 L764 209"/>
<path d="M747.4 219.5 L759.3 221.2 L776.2 222.9"/>
<path d="M751 222 L753 245 L758 262"/>
<path d="M788 189 L786.4 201.7 L777.9 207.6 L776.2 222.9 L784.7 233 L783.8 242.4 L801.6 245.8 L830.4 246.6 L847.3 253.4 L869.4 257.6 L888 250.8 L901.6 241.5 L921.9 228.8 L926 228.8 L927 233 L915 238 L921 243"/>
<path d="M811.8 189 L811.8 209.3 L806.7 238"/>
<path d="M833 189 L828.7 209.3 L821 238"/>
<path d="M850.7 189 L869.4 198.3 L891.4 220.3 L898.2 241.5"/>
<path d="M891.4 220.3 L864.3 236.4 L852.4 253.4 L847.3 272 L858 294"/>
<path d="M802.5 200.9 L811.8 197.5 L830.4 197.5"/>
<path d="M802.5 200.9 L801.6 245"/>
<path d="M799 209 L828.7 209.3 L832 219.5 L838 225.4 L837.2 236.4 L833.8 245 L825.3 255"/>
<path d="M799 209 L794 229"/>
<path d="M806 209 L798 238"/>
<path d="M811 215 L831 219"/>
<path d="M810 221 L836 226"/>
<path d="M809 227 L837 232"/>
<path d="M808 233 L837 238"/>
<path d="M807 239 L835 244"/>
<path d="M783 251.7 L786.4 247.4 L827.9 256.8 L847.3 265.2 L866 261.8"/>
<path d="M780 256 L801 261 L801.6 245.8"/>
<path d="M778 260 L801 266"/>
<path d="M782 253 L801 256"/>
<path d="M801 249 L828 253"/>
<path d="M830 250 L847 258"/>
<path d="M828 254 L846 262"/>
<path d="M826 259 L846 268"/>
<path d="M847.3 253.4 L866 261.8 L866.8 270.3 L847.3 272"/>
<path d="M848 262 L866 265"/>
<path d="M848 267 L866 268"/>
<path d="M866.8 270.3 L873 272 L879 276 L886 270 L890 262 L898 256 L910 250 L899 241"/>
<path d="M892.2 203.4 L899.9 211 L919.3 208.5"/>
<path d="M899.9 211 L898.2 214.4 L891.4 220.3"/>
<path d="M898.2 214.4 L916.8 220.3"/>
<path d="M859.2 234.7 L877.8 208.5 L891.4 220.3"/>
<path d="M873.6 211.9 L886.3 223.7"/>
<path d="M870.2 215.3 L881.2 227.1"/>
<path d="M867.7 219.5 L877 229.7"/>
<path d="M865.1 224.6 L871.9 232.2"/>
<path d="M862.6 229.7 L866.8 234.7"/>
<path d="M852 236 L862 238"/>
<path d="M851 240 L861 242"/>
<path d="M850 244 L860 246"/>
<path d="M849 248 L859 250"/>
<path d="M838 229 L847 232 L852 236"/>
<path d="M826 268 L833 277 L842 281 L847.3 272"/>
<path d="M847.3 272 L856 288 L862 292 L863 283"/>
<path d="M829 270 L836 276"/>
</g>
<g fill="none" stroke="#fff" stroke-width="1" stroke-linecap="round" stroke-linejoin="round" opacity=".9">
<path d="M949.7 492.1C950.9 493.6 956.3 499.7 958.8 503.6C961.3 507.5 967.1 517.5 968.6 521.7C970.1 525.9 969.2 530.4 970.3 534.8C971.4 539.2 975.9 551.9 976.8 554.5"/>
<path d="M968.6 523.3C971 525 981.7 533.1 986.7 536.4C991.7 539.7 1001.8 545.7 1006.4 547.9C1011 550.1 1019.2 552.2 1021.2 552.9"/>
<path d="M1419.5 530C1423 530.9 1442.3 534.7 1446 537C1449.7 539.3 1447.8 545.6 1447 547C1446.2 548.4 1440.9 547.4 1440 547.5"/>
<path d="M1447 547 L1460.3 547"/>
<path d="M1466.9 607.5C1468.6 607.3 1477.2 606.6 1480 606C1482.8 605.4 1486.9 603.4 1488 603"/>
<path d="M1548 613.5 L1565 611"/>
<path d="M1341 657C1340.7 659.5 1336.5 672.9 1339 676C1341.5 679.1 1357.6 678.4 1360 680C1362.4 681.6 1357.4 686.9 1357 688"/>
<path d="M1855 654C1855.9 654.8 1860.8 658.1 1862 660C1863.2 661.9 1863.7 666.9 1864 668"/>
<path d="M1311 443 L1330 443"/>
<path d="M1311 484 L1322 478"/>
<path d="M1027.8 353 L1061.7 353.5"/>
<path d="M1027.8 356.5 L1061.7 357"/>
<path d="M1028 360 L1061.7 360.5"/>
<path d="M1029 363.3 L1061.7 364"/>
<path d="M1043.6 349.7 L1043.6 367.8"/>
<path d="M1049.2 349.7 L1049.5 367.8"/>
<path d="M1056 349.7 L1056.5 367.8"/>
<path d="M1036 350 L1036.5 366"/>
<path d="M983.7 361C984 362.2 984.6 367.6 986 370C987.4 372.4 992.4 376.3 993.9 379C995.4 381.7 995.8 387.4 997.3 390.4C998.8 393.4 1004.1 400.2 1005.2 401.7"/>
<path d="M997.3 370C998.4 369.5 1002.9 366.6 1005.2 366.6C1007.5 366.6 1011.2 369.2 1014.2 370C1017.2 370.8 1026 372 1027.8 372.3"/>
<path d="M1027.8 363.3C1028.1 365.4 1029.2 375.7 1030 379C1030.8 382.3 1033.5 386.8 1034 388"/>
<path d="M1061.7 367.8C1061.5 370.2 1059.6 382.3 1060.5 385.8C1061.4 389.3 1067.3 392.7 1068.4 393.8"/>
<path d="M1079.7 394.9C1081.8 395.5 1091.5 399.3 1095.5 399.4C1099.5 399.5 1108.1 396.5 1110 396"/>
<path d="M1087.6 399.4C1088.1 400.6 1090.7 405.7 1091 408.4C1091.3 411.1 1090.2 416.3 1090 420C1089.8 423.7 1089.8 433.9 1089.8 436"/>
<path d="M988 376C989.6 375.5 997.3 371.5 1000 372C1002.7 372.5 1006.4 377.3 1008 380C1009.6 382.7 1011.5 390.4 1012 392"/>
<path d="M975 396C976.3 395.5 982.5 393.1 985 392C987.5 390.9 991.6 388.3 994 388C996.4 387.7 1001.8 389.7 1003 390"/>
<path d="M966 408C967.6 407.2 974.8 403.5 978 402C981.2 400.5 988.4 397.7 990 397"/>
<path d="M1003 405C1004.6 405.9 1011.7 410.5 1015 412C1018.3 413.5 1024.7 414.4 1028 416C1031.3 417.6 1038.4 422.9 1040 424"/>
<path d="M1010 403C1011.3 403.7 1016.8 406.9 1020 408C1023.2 409.1 1030.3 409.7 1034 411C1037.7 412.3 1046.1 417.1 1048 418"/>
<path d="M1047 400C1047.7 401.3 1050.8 407.6 1052 410C1053.2 412.4 1055.5 416.9 1056 418"/>
<path d="M1050 372C1050.3 373.7 1052.1 381.7 1052 385C1051.9 388.3 1049.4 395.4 1049 397"/>
<path d="M1062 405C1063.3 405.7 1069.2 409.2 1072 410C1074.8 410.8 1080.6 409.7 1083 411C1085.4 412.3 1089.1 418.8 1090 420"/>
<path d="M1068 394C1068.3 395.5 1069.5 402.9 1070 405C1070.5 407.1 1071.7 409.3 1072 410"/>
<path d="M1075 425C1075.9 425.4 1080.3 426.5 1082 428C1083.7 429.5 1087.2 434.9 1088 436"/>
<path d="M1040 430C1040.8 430.8 1045.5 434 1046 436C1046.5 438 1044.3 443.8 1044 445"/>
<path d="M1012 441C1013.3 441.7 1019.6 444.5 1022 446C1024.4 447.5 1028.9 451.2 1030 452"/>
<path d="M1004 452C1005.1 452.4 1009.9 453.7 1012 455C1014.1 456.3 1018.9 461.1 1020 462"/>
<path d="M1000 330C1001.1 329.5 1006 327.1 1008 326C1010 324.9 1014.1 322.5 1015 322"/>
<path d="M996 338C997.1 337.5 1002.1 334.3 1004 334C1005.9 333.7 1009.2 335.7 1010 336"/>
<path d="M1042 300.5C1042.3 302 1042.9 309.1 1044 312C1045.1 314.9 1049.2 320.7 1050 322"/>
<path d="M1090 306C1090.5 307.6 1093.7 314.8 1094 318C1094.3 321.2 1092.3 328.4 1092 330"/>
<path d="M1050 440C1051.3 440.8 1057.3 445.5 1060 446C1062.7 446.5 1068 445.2 1070 444C1072 442.8 1074.3 437.9 1075 437"/>
</g>
<text x="1016" y="614" text-anchor="middle" font-family="Liberation Sans,sans-serif" font-size="13.8" font-weight="bold" letter-spacing="2.1" fill="#7689a8" stroke="#f6f6f4" stroke-width="2.4" stroke-linejoin="round" paint-order="stroke">MONSENA</text>
<g transform="translate(1027.4 362.8)" opacity="1"><path d="M0 0C0.1 -0.4 0.3 -1.3 0.5 -2.3C0.7 -3.2 0.9 -4.5 1.3 -5.7C1.7 -6.9 2.2 -8.4 2.8 -9.7C3.4 -11 4.2 -12.4 5.1 -13.7C5.9 -15 7 -16.4 7.9 -17.7C8.8 -19 9.8 -20.4 10.5 -21.7C11.2 -22.9 11.8 -24.1 12.2 -25.2C12.6 -26.3 12.6 -27.9 12.7 -28.5A12.7 12.7 0 0 0 -12.7 -28.5C-12.6 -27.9 -12.6 -26.3 -12.2 -25.2C-11.8 -24.1 -11.2 -22.9 -10.5 -21.7C-9.8 -20.4 -8.8 -19 -7.9 -17.7C-7 -16.4 -5.9 -15 -5.1 -13.7C-4.2 -12.4 -3.4 -11 -2.8 -9.7C-2.2 -8.4 -1.7 -6.9 -1.3 -5.7C-0.9 -4.5 -0.7 -3.2 -0.5 -2.3C-0.3 -1.3 -0.1 -0.4 0 0Z" fill="#ea4335" stroke="#fff" stroke-opacity=".4" stroke-width=".8"/><circle cx="0" cy="-28.6" r="4.5" fill="#811411"/></g>
<g transform="translate(1025.2 488.6)" opacity="1"><path d="M0 0C0.1 -0.4 0.3 -1.3 0.5 -2.3C0.7 -3.2 0.9 -4.5 1.3 -5.7C1.7 -6.9 2.2 -8.4 2.8 -9.7C3.4 -11 4.2 -12.4 5.1 -13.7C5.9 -15 7 -16.4 7.9 -17.7C8.8 -19 9.8 -20.4 10.5 -21.7C11.2 -22.9 11.8 -24.1 12.2 -25.2C12.6 -26.3 12.6 -27.9 12.7 -28.5A12.7 12.7 0 0 0 -12.7 -28.5C-12.6 -27.9 -12.6 -26.3 -12.2 -25.2C-11.8 -24.1 -11.2 -22.9 -10.5 -21.7C-9.8 -20.4 -8.8 -19 -7.9 -17.7C-7 -16.4 -5.9 -15 -5.1 -13.7C-4.2 -12.4 -3.4 -11 -2.8 -9.7C-2.2 -8.4 -1.7 -6.9 -1.3 -5.7C-0.9 -4.5 -0.7 -3.2 -0.5 -2.3C-0.3 -1.3 -0.1 -0.4 0 0Z" fill="#ea4335" stroke="#fff" stroke-opacity=".4" stroke-width=".8"/><circle cx="0" cy="-28.6" r="4.5" fill="#811411"/></g>
<g transform="translate(981.5 357.3)" opacity="1"><path d="M0 0C0.1 -0.4 0.3 -1.3 0.5 -2.3C0.7 -3.2 0.9 -4.5 1.3 -5.7C1.7 -6.9 2.2 -8.4 2.8 -9.7C3.4 -11 4.2 -12.4 5.1 -13.7C5.9 -15 7 -16.4 7.9 -17.7C8.8 -19 9.8 -20.4 10.5 -21.7C11.2 -22.9 11.8 -24.1 12.2 -25.2C12.6 -26.3 12.6 -27.9 12.7 -28.5A12.7 12.7 0 0 0 -12.7 -28.5C-12.6 -27.9 -12.6 -26.3 -12.2 -25.2C-11.8 -24.1 -11.2 -22.9 -10.5 -21.7C-9.8 -20.4 -8.8 -19 -7.9 -17.7C-7 -16.4 -5.9 -15 -5.1 -13.7C-4.2 -12.4 -3.4 -11 -2.8 -9.7C-2.2 -8.4 -1.7 -6.9 -1.3 -5.7C-0.9 -4.5 -0.7 -3.2 -0.5 -2.3C-0.3 -1.3 -0.1 -0.4 0 0Z" fill="#ea4335" stroke="#fff" stroke-opacity=".4" stroke-width=".8"/><circle cx="0" cy="-28.6" r="4.5" fill="#811411"/></g>
<g transform="translate(1092.4 350.6)" opacity="1"><path d="M0 0C0.1 -0.4 0.3 -1.3 0.5 -2.3C0.7 -3.2 0.9 -4.5 1.3 -5.7C1.7 -6.9 2.2 -8.4 2.8 -9.7C3.4 -11 4.2 -12.4 5.1 -13.7C5.9 -15 7 -16.4 7.9 -17.7C8.8 -19 9.8 -20.4 10.5 -21.7C11.2 -22.9 11.8 -24.1 12.2 -25.2C12.6 -26.3 12.6 -27.9 12.7 -28.5A12.7 12.7 0 0 0 -12.7 -28.5C-12.6 -27.9 -12.6 -26.3 -12.2 -25.2C-11.8 -24.1 -11.2 -22.9 -10.5 -21.7C-9.8 -20.4 -8.8 -19 -7.9 -17.7C-7 -16.4 -5.9 -15 -5.1 -13.7C-4.2 -12.4 -3.4 -11 -2.8 -9.7C-2.2 -8.4 -1.7 -6.9 -1.3 -5.7C-0.9 -4.5 -0.7 -3.2 -0.5 -2.3C-0.3 -1.3 -0.1 -0.4 0 0Z" fill="#ea4335" stroke="#fff" stroke-opacity=".4" stroke-width=".8"/><circle cx="0" cy="-28.6" r="4.5" fill="#811411"/></g>
<g transform="translate(1075.5 399.4)" opacity="1"><path d="M0 0C0.1 -0.4 0.3 -1.3 0.5 -2.3C0.7 -3.2 0.9 -4.5 1.3 -5.7C1.7 -6.9 2.2 -8.4 2.8 -9.7C3.4 -11 4.2 -12.4 5.1 -13.7C5.9 -15 7 -16.4 7.9 -17.7C8.8 -19 9.8 -20.4 10.5 -21.7C11.2 -22.9 11.8 -24.1 12.2 -25.2C12.6 -26.3 12.6 -27.9 12.7 -28.5A12.7 12.7 0 0 0 -12.7 -28.5C-12.6 -27.9 -12.6 -26.3 -12.2 -25.2C-11.8 -24.1 -11.2 -22.9 -10.5 -21.7C-9.8 -20.4 -8.8 -19 -7.9 -17.7C-7 -16.4 -5.9 -15 -5.1 -13.7C-4.2 -12.4 -3.4 -11 -2.8 -9.7C-2.2 -8.4 -1.7 -6.9 -1.3 -5.7C-0.9 -4.5 -0.7 -3.2 -0.5 -2.3C-0.3 -1.3 -0.1 -0.4 0 0Z" fill="#ea4335" stroke="#fff" stroke-opacity=".4" stroke-width=".8"/><circle cx="0" cy="-28.6" r="4.5" fill="#811411"/></g>
<g transform="translate(1024.4 531)" opacity="1"><path d="M0 0C0.1 -0.4 0.3 -1.3 0.5 -2.3C0.7 -3.2 0.9 -4.5 1.3 -5.7C1.7 -6.9 2.2 -8.4 2.8 -9.7C3.4 -11 4.2 -12.4 5.1 -13.7C5.9 -15 7 -16.4 7.9 -17.7C8.8 -19 9.8 -20.4 10.5 -21.7C11.2 -22.9 11.8 -24.1 12.2 -25.2C12.6 -26.3 12.6 -27.9 12.7 -28.5A12.7 12.7 0 0 0 -12.7 -28.5C-12.6 -27.9 -12.6 -26.3 -12.2 -25.2C-11.8 -24.1 -11.2 -22.9 -10.5 -21.7C-9.8 -20.4 -8.8 -19 -7.9 -17.7C-7 -16.4 -5.9 -15 -5.1 -13.7C-4.2 -12.4 -3.4 -11 -2.8 -9.7C-2.2 -8.4 -1.7 -6.9 -1.3 -5.7C-0.9 -4.5 -0.7 -3.2 -0.5 -2.3C-0.3 -1.3 -0.1 -0.4 0 0Z" fill="#ea4335" stroke="#fff" stroke-opacity=".4" stroke-width=".8"/><circle cx="0" cy="-28.6" r="4.5" fill="#811411"/></g>
<g transform="translate(1062.5 555.3)" opacity="1"><path d="M0 0C0.1 -0.4 0.3 -1.3 0.5 -2.3C0.7 -3.2 0.9 -4.5 1.3 -5.7C1.7 -6.9 2.2 -8.4 2.8 -9.7C3.4 -11 4.2 -12.4 5.1 -13.7C5.9 -15 7 -16.4 7.9 -17.7C8.8 -19 9.8 -20.4 10.5 -21.7C11.2 -22.9 11.8 -24.1 12.2 -25.2C12.6 -26.3 12.6 -27.9 12.7 -28.5A12.7 12.7 0 0 0 -12.7 -28.5C-12.6 -27.9 -12.6 -26.3 -12.2 -25.2C-11.8 -24.1 -11.2 -22.9 -10.5 -21.7C-9.8 -20.4 -8.8 -19 -7.9 -17.7C-7 -16.4 -5.9 -15 -5.1 -13.7C-4.2 -12.4 -3.4 -11 -2.8 -9.7C-2.2 -8.4 -1.7 -6.9 -1.3 -5.7C-0.9 -4.5 -0.7 -3.2 -0.5 -2.3C-0.3 -1.3 -0.1 -0.4 0 0Z" fill="#ea4335" stroke="#fff" stroke-opacity=".4" stroke-width=".8"/><circle cx="0" cy="-28.6" r="4.5" fill="#811411"/></g>
<g><path d="M1009.3 325.5A14.6 14.6 0 0 1 1030.3 325.5M1033.8 331.6A14.6 14.6 0 0 1 1023.3 349.8M1016.3 349.8A14.6 14.6 0 0 1 1005.8 331.6" fill="none" stroke="#008cff" stroke-width="3.0" opacity="0.6"/><path d="M1006.4 322.7A18.6 18.6 0 0 1 1033.2 322.7M1037.7 330.5A18.6 18.6 0 0 1 1024.3 353.6M1015.3 353.6A18.6 18.6 0 0 1 1001.9 330.5" fill="none" stroke="#008cff" stroke-width="3.1" opacity="0.36"/><path d="M1003.5 319.8A22.7 22.7 0 0 1 1036.1 319.8M1041.6 329.3A22.7 22.7 0 0 1 1025.3 357.6M1014.3 357.6A22.7 22.7 0 0 1 998 329.3" fill="none" stroke="#008cff" stroke-width="3.1" opacity="0.2"/><circle cx="1019.8" cy="335.6" r="13" fill="#fff" opacity=".75"/><circle cx="1019.8" cy="335.6" r="12.1" fill="#008cff"/><text x="1019.8" y="339.6" text-anchor="middle" font-family="Liberation Sans,sans-serif" font-size="11" font-weight="bold" fill="#000">5</text></g>
<g><path d="M1055.8 327.2A14.6 14.6 0 0 1 1076.8 327.2M1080.3 333.3A14.6 14.6 0 0 1 1069.8 351.5M1062.8 351.5A14.6 14.6 0 0 1 1052.3 333.3" fill="none" stroke="#008cff" stroke-width="3.0" opacity="0.6"/><path d="M1052.9 324.4A18.6 18.6 0 0 1 1079.7 324.4M1084.2 332.2A18.6 18.6 0 0 1 1070.8 355.3M1061.8 355.3A18.6 18.6 0 0 1 1048.4 332.2" fill="none" stroke="#008cff" stroke-width="3.1" opacity="0.36"/><path d="M1050 321.5A22.7 22.7 0 0 1 1082.6 321.5M1088.1 331A22.7 22.7 0 0 1 1071.8 359.3M1060.8 359.3A22.7 22.7 0 0 1 1044.5 331" fill="none" stroke="#008cff" stroke-width="3.1" opacity="0.2"/><circle cx="1066.3" cy="337.3" r="13" fill="#fff" opacity=".75"/><circle cx="1066.3" cy="337.3" r="12.1" fill="#008cff"/><text x="1066.3" y="341.3" text-anchor="middle" font-family="Liberation Sans,sans-serif" font-size="11" font-weight="bold" fill="#000">6</text></g>
<g><path d="M1005 388.9A14.6 14.6 0 0 1 1026 388.9M1029.5 395A14.6 14.6 0 0 1 1019 413.2M1012 413.2A14.6 14.6 0 0 1 1001.5 395" fill="none" stroke="#008cff" stroke-width="3.0" opacity="0.6"/><path d="M1002.1 386.1A18.6 18.6 0 0 1 1028.9 386.1M1033.4 393.9A18.6 18.6 0 0 1 1020 417M1011 417A18.6 18.6 0 0 1 997.6 393.9" fill="none" stroke="#008cff" stroke-width="3.1" opacity="0.36"/><path d="M999.2 383.2A22.7 22.7 0 0 1 1031.8 383.2M1037.3 392.7A22.7 22.7 0 0 1 1021 421M1010 421A22.7 22.7 0 0 1 993.7 392.7" fill="none" stroke="#008cff" stroke-width="3.1" opacity="0.2"/><circle cx="1015.5" cy="399" r="13" fill="#fff" opacity=".75"/><circle cx="1015.5" cy="399" r="12.1" fill="#008cff"/><text x="1015.5" y="403" text-anchor="middle" font-family="Liberation Sans,sans-serif" font-size="11" font-weight="bold" fill="#000">2</text></g>
<g><path d="M1032.1 383.1A14.6 14.6 0 0 1 1053.1 383.1M1056.6 389.2A14.6 14.6 0 0 1 1046.1 407.4M1039.1 407.4A14.6 14.6 0 0 1 1028.6 389.2" fill="none" stroke="#008cff" stroke-width="3.0" opacity="0.6"/><path d="M1029.2 380.3A18.6 18.6 0 0 1 1056 380.3M1060.5 388.1A18.6 18.6 0 0 1 1047.1 411.2M1038.1 411.2A18.6 18.6 0 0 1 1024.7 388.1" fill="none" stroke="#008cff" stroke-width="3.1" opacity="0.36"/><path d="M1026.3 377.4A22.7 22.7 0 0 1 1058.9 377.4M1064.4 386.9A22.7 22.7 0 0 1 1048.1 415.2M1037.1 415.2A22.7 22.7 0 0 1 1020.8 386.9" fill="none" stroke="#008cff" stroke-width="3.1" opacity="0.2"/><circle cx="1042.6" cy="393.2" r="13" fill="#fff" opacity=".75"/><circle cx="1042.6" cy="393.2" r="12.1" fill="#008cff"/><text x="1042.6" y="397.2" text-anchor="middle" font-family="Liberation Sans,sans-serif" font-size="11" font-weight="bold" fill="#000">6</text></g>
<g><path d="M1051.1 411.6A15.3 15.3 0 0 1 1073.1 411.6M1076.8 418A15.3 15.3 0 0 1 1065.8 437M1058.4 437A15.3 15.3 0 0 1 1047.4 418" fill="none" stroke="#ffbf00" stroke-width="3.1" opacity="0.58"/><path d="M1048.1 408.7A19.4 19.4 0 0 1 1076.1 408.7M1080.7 416.9A19.4 19.4 0 0 1 1066.8 441M1057.4 441A19.4 19.4 0 0 1 1043.5 416.9" fill="none" stroke="#ffbf00" stroke-width="3.2" opacity="0.34"/><path d="M1045.1 405.8A23.6 23.6 0 0 1 1079.1 405.8M1084.8 415.7A23.6 23.6 0 0 1 1067.8 445.1M1056.4 445.1A23.6 23.6 0 0 1 1039.4 415.7" fill="none" stroke="#ffbf00" stroke-width="3.2" opacity="0.19"/><circle cx="1062.1" cy="422.2" r="13.6" fill="#fff" opacity=".75"/><circle cx="1062.1" cy="422.2" r="12.7" fill="#ffbf00"/><text x="1062.1" y="426.2" text-anchor="middle" font-family="Liberation Sans,sans-serif" font-size="11" font-weight="bold" fill="#000">11</text></g>
<g><path d="M1028.4 443.9A14.6 14.6 0 0 1 1049.4 443.9M1052.9 450A14.6 14.6 0 0 1 1042.4 468.2M1035.4 468.2A14.6 14.6 0 0 1 1024.9 450" fill="none" stroke="#008cff" stroke-width="3.0" opacity="0.6"/><path d="M1025.5 441.1A18.6 18.6 0 0 1 1052.3 441.1M1056.8 448.9A18.6 18.6 0 0 1 1043.4 472M1034.4 472A18.6 18.6 0 0 1 1021 448.9" fill="none" stroke="#008cff" stroke-width="3.1" opacity="0.36"/><path d="M1022.6 438.2A22.7 22.7 0 0 1 1055.2 438.2M1060.7 447.7A22.7 22.7 0 0 1 1044.4 476M1033.4 476A22.7 22.7 0 0 1 1017.1 447.7" fill="none" stroke="#008cff" stroke-width="3.1" opacity="0.2"/><circle cx="1038.9" cy="454" r="13" fill="#fff" opacity=".75"/><circle cx="1038.9" cy="454" r="12.1" fill="#008cff"/><text x="1038.9" y="458" text-anchor="middle" font-family="Liberation Sans,sans-serif" font-size="11" font-weight="bold" fill="#000">3</text></g>
<g><path d="M1079.3 442.3A14.6 14.6 0 0 1 1100.3 442.3M1103.8 448.4A14.6 14.6 0 0 1 1093.3 466.6M1086.3 466.6A14.6 14.6 0 0 1 1075.8 448.4" fill="none" stroke="#008cff" stroke-width="3.0" opacity="0.6"/><path d="M1076.4 439.5A18.6 18.6 0 0 1 1103.2 439.5M1107.7 447.3A18.6 18.6 0 0 1 1094.3 470.4M1085.3 470.4A18.6 18.6 0 0 1 1071.9 447.3" fill="none" stroke="#008cff" stroke-width="3.1" opacity="0.36"/><path d="M1073.5 436.6A22.7 22.7 0 0 1 1106.1 436.6M1111.6 446.1A22.7 22.7 0 0 1 1095.3 474.4M1084.3 474.4A22.7 22.7 0 0 1 1068 446.1" fill="none" stroke="#008cff" stroke-width="3.1" opacity="0.2"/><circle cx="1089.8" cy="452.4" r="13" fill="#fff" opacity=".75"/><circle cx="1089.8" cy="452.4" r="12.1" fill="#008cff"/><text x="1089.8" y="456.4" text-anchor="middle" font-family="Liberation Sans,sans-serif" font-size="11" font-weight="bold" fill="#000">4</text></g>
<g><path d="M995 465.2A14.6 14.6 0 0 1 1016 465.2M1019.5 471.3A14.6 14.6 0 0 1 1009 489.5M1002 489.5A14.6 14.6 0 0 1 991.5 471.3" fill="none" stroke="#008cff" stroke-width="3.0" opacity="0.6"/><path d="M992.1 462.4A18.6 18.6 0 0 1 1018.9 462.4M1023.4 470.2A18.6 18.6 0 0 1 1010 493.3M1001 493.3A18.6 18.6 0 0 1 987.6 470.2" fill="none" stroke="#008cff" stroke-width="3.1" opacity="0.36"/><path d="M989.2 459.5A22.7 22.7 0 0 1 1021.8 459.5M1027.3 469A22.7 22.7 0 0 1 1011 497.3M1000 497.3A22.7 22.7 0 0 1 983.7 469" fill="none" stroke="#008cff" stroke-width="3.1" opacity="0.2"/><circle cx="1005.5" cy="475.3" r="13" fill="#fff" opacity=".75"/><circle cx="1005.5" cy="475.3" r="12.1" fill="#008cff"/><text x="1005.5" y="479.3" text-anchor="middle" font-family="Liberation Sans,sans-serif" font-size="11" font-weight="bold" fill="#000">4</text></g>
</svg>
<div class="gm" style="left:10px;top:10px;width:169px;height:40px">
<span style="position:absolute;left:17px;top:0;line-height:40px;font-size:18px;font-weight:bold;color:#000">Map</span>
<span style="position:absolute;left:69px;top:0;width:1px;height:40px;background:#e6e6e6"></span>
<span style="position:absolute;left:87px;top:0;line-height:40px;font-size:18px;color:#565656">Satellite</span>
</div>
<div class="gm" style="left:1603px;top:10px;width:40px;height:40px">
<svg width="40" height="40" viewBox="0 0 40 40" style="position:absolute;left:0;top:0"><path d="M12 17V12H17M23 12H28V17M28 23V28H23M17 28H12V23" fill="none" stroke="#555" stroke-width="2"/></svg>
</div>
<div class="gm" style="left:1603px;top:323px;width:40px;height:40px">
<svg width="40" height="40" viewBox="1814 512 40 40" style="position:absolute;left:0;top:0">
<path d="M1828.6 527.2H1838.5Q1839.3 527.2 1839.6 528.2L1842 537.4Q1842.1 538.3 1841.2 538.4L1839.6 538.5Q1839 538.4 1838.8 537.6L1837.8 533.4V546.5H1834V539H1833V546.5H1829.1V533.4L1828.2 537.6Q1828 538.4 1827.4 538.5L1825.8 538.4Q1824.9 538.3 1825 537.4L1827.4 528.2Q1827.7 527.2 1828.6 527.2Z" fill="#fcc12d" stroke="#5a5f73" stroke-width=".6" stroke-linejoin="round"/>
<path d="M1830.3 527.3H1836.7L1833.5 532.5Z" fill="#e08a2e"/>
<circle cx="1833.5" cy="522.3" r="5" fill="#fcc12d" stroke="#5a5f73" stroke-width=".6"/>
</svg>
</div>
<div class="gm" style="left:1603px;top:395px;width:40px;height:81px">
<svg width="40" height="81" viewBox="0 0 40 81" style="position:absolute;left:0;top:0"><path d="M11 18h18v4H11zM18 11h4v18h-4zM11 59h18v4H11z" fill="#666"/><path d="M5 40.5H35" stroke="#e6e6e6" stroke-width="1"/></svg>
</div>
<svg width="80" height="30" viewBox="0 0 80 30" style="position:absolute;left:0;top:470px"><text x="5.6" y="22.2" font-family="Liberation Sans,sans-serif" font-size="20.4" stroke="#fff" stroke-opacity=".75" stroke-width="2.6" stroke-linejoin="round" paint-order="stroke" letter-spacing="-.55"><tspan fill="#4285f4">G</tspan><tspan fill="#ea4335">o</tspan><tspan fill="#fbbc05">o</tspan><tspan fill="#4285f4">g</tspan><tspan fill="#34a853">l</tspan><tspan fill="#ea4335">e</tspan></text></svg>
<div class="att" style="left:1401px;width:86px"><span style="left:5px">Map data ©2020</span></div>
<div class="att" style="left:1487px;width:71px"><span style="left:6px">Terms of Use</span></div>
<div class="att" style="left:1558px;width:95px"><span style="left:6px;letter-spacing:-.12px">Report a map error</span></div>
</div>

<div id="srch"><i></i><svg width="34" height="30" viewBox="1642 729 34 30" style="position:absolute;left:-1px;top:-1px"><circle cx="1658.1" cy="743" r="4.4" fill="none" stroke="#333" stroke-width="1.7"/><path d="M1661.4 746.3 1664.6 749.4" stroke="#333" stroke-width="1.9" stroke-linecap="round"/></svg></div>
<table>
<colgroup><col style="width:259px"><col style="width:168px"><col style="width:174px"><col style="width:232px"><col style="width:195px"><col style="width:200px"><col style="width:245px"><col style="width:180px"></colgroup>
<tr><th style="letter-spacing:0.25px">Uređaj<svg width="14" height="15" viewBox="449 768 14 15"><path d="M451.1 768.2h2.6v10h2.2l-3.4 3.9-3.4-3.9h2zM457.9 781.8h2.6v-10.3h2.1l-3.4-3.1-3.4 3.1h2.1z" fill="#d9dde1"/></svg></th><th style="letter-spacing:-0.1px">Serijski broj<svg width="14" height="15" viewBox="449 768 14 15"><path d="M451.1 768.2h2.6v10h2.2l-3.4 3.9-3.4-3.9h2zM457.9 781.8h2.6v-10.3h2.1l-3.4-3.1-3.4 3.1h2.1z" fill="#d9dde1"/></svg></th><th style="letter-spacing:0.08px">Tip uređaja<svg width="14" height="15" viewBox="449 768 14 15"><path d="M451.1 768.2h2.6v10h2.2l-3.4 3.9-3.4-3.9h2zM457.9 781.8h2.6v-10.3h2.1l-3.4-3.1-3.4 3.1h2.1z" fill="#d9dde1"/></svg></th><th style="letter-spacing:-0.18px">Adresa<svg width="14" height="15" viewBox="449 768 14 15"><path d="M451.1 768.2h2.6v10h2.2l-3.4 3.9-3.4-3.9h2zM457.9 781.8h2.6v-10.3h2.1l-3.4-3.1-3.4 3.1h2.1z" fill="#d9dde1"/></svg></th><th style="letter-spacing:0.15px">Mjesto/naselje<svg width="14" height="15" viewBox="449 768 14 15"><path d="M451.1 768.2h2.6v10h2.2l-3.4 3.9-3.4-3.9h2zM457.9 781.8h2.6v-10.3h2.1l-3.4-3.1-3.4 3.1h2.1z" fill="#d9dde1"/></svg></th><th style="letter-spacing:0.21px">Interna oznaka<svg width="14" height="15" viewBox="449 768 14 15"><path d="M451.1 768.2h2.6v10h2.2l-3.4 3.9-3.4-3.9h2zM457.9 781.8h2.6v-10.3h2.1l-3.4-3.1-3.4 3.1h2.1z" fill="#d9dde1"/></svg></th><th style="letter-spacing:0.08px">Vrijeme zadnjeg očitanja</th><th class="r" style="letter-spacing:0.09px">Zadnje očitanje</th></tr>
<tr class="o"><td><a>Naziv brojila 1</a></td><td>111111111</td><td><a>Analogno brojilo</a></td><td>Ulica adresa 123</td><td><a>Rovinj</a></td><td></td><td>2020-04-05 12:53:39</td><td class="r">610</td></tr>
<tr><td><a>Naziv brojila 2</a></td><td></td><td><a>Analogno brojilo</a></td><td>Cesta za adresu 142</td><td><a>Rovinj</a></td><td></td><td>2020-02-16 21:17:20</td><td class="r">600</td></tr>
<tr class="o"><td><a>Naziv brojila 3</a></td><td></td><td><a>Analogno brojilo</a></td><td>Adresa 100</td><td><a>Rovinj</a></td><td></td><td>2020-02-17 01:00:38</td><td class="r">5468</td></tr>
<tr><td><a>Naziv brojila 4</a></td><td></td><td><a>Analogno brojilo</a></td><td>Trg 158</td><td><a>Rovinj</a></td><td></td><td>2020-02-16 23:00:41</td><td class="r">5041</td></tr>
<tr class="o"><td><a>Naziv brojila 5</a></td><td></td><td><a>Digitalno brojilo</a></td><td>Adresa 158</td><td><a>Rovinj</a></td><td></td><td>2020-02-17 00:40:45</td><td class="r">576430</td></tr>
<tr><td>&nbsp;</td><td></td><td></td><td></td><td></td><td></td><td></td><td></td></tr>
</table>
</body>
</html>
